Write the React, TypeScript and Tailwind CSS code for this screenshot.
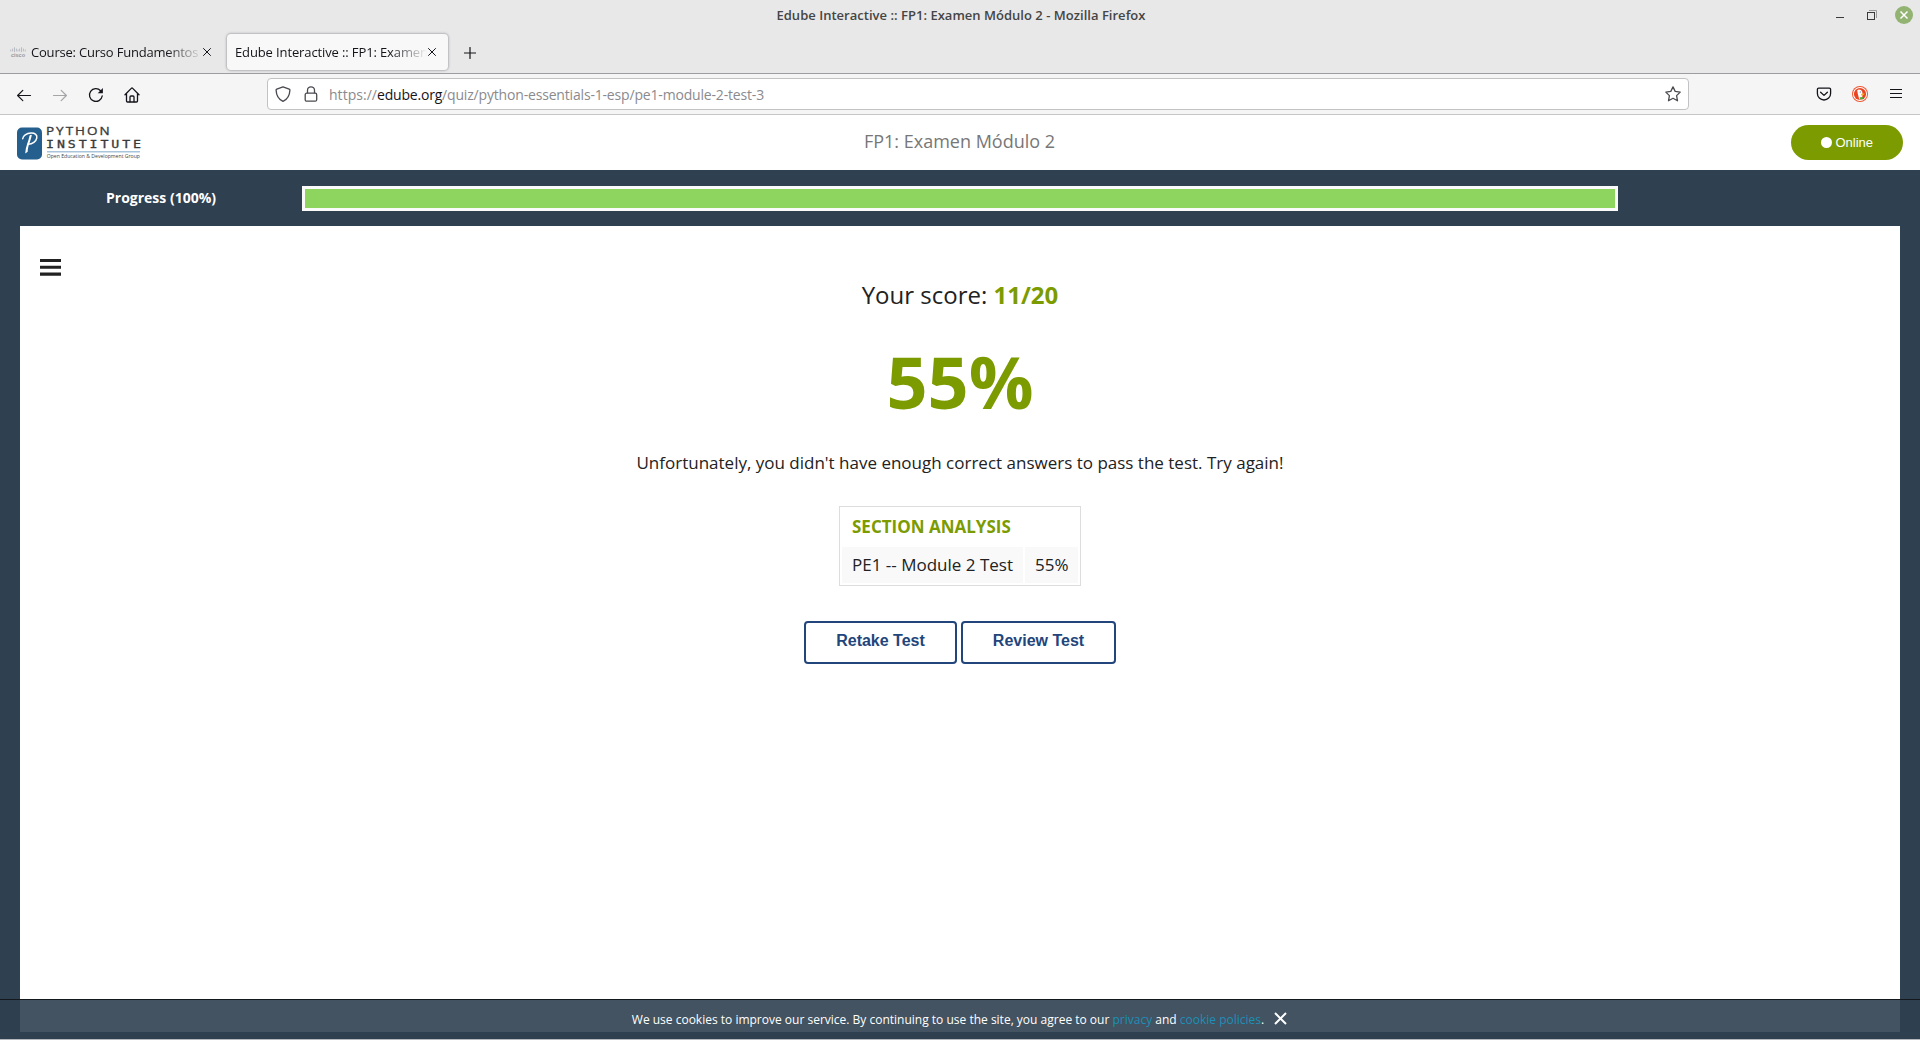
import React from "react";

const OPEN = "font-['Open_Sans',sans-serif]";

function CloseGlyph({ className }: { className?: string }) {
  return (
    <svg width="8" height="8" viewBox="0 0 8 8" className={className} fill="none" stroke="#15141a" strokeWidth="1" strokeLinecap="round">
      <path d="M0.5 0.5 7.5 7.5M7.5 0.5 0.5 7.5" />
    </svg>
  );
}

function CiscoIcon() {
  return (
    <svg width="16" height="10" viewBox="0 0 16 10" className="shrink-0 overflow-visible">
      <g stroke="#b9bbc3" strokeWidth="1" strokeLinecap="round">
        <path d="M.7 3v1M2.6 2v2M4.500 .7v4M6.400 2v2M8 3v1M9.600 2v2M11.500 .7v4M13.400 2v2M15.300 3v1" />
      </g>
      <text x="1" y="9.800" fontSize="5.800" fontWeight="700" fill="#9496a0" textLength="14" lengthAdjust="spacingAndGlyphs" fontFamily="Liberation Sans, sans-serif">
        cisco
      </text>
    </svg>
  );
}

function TitleBar() {
  return (
    <div className="relative flex h-[30px] items-center justify-center">
      <span className={`${OPEN} ml-[2px] text-[13px] font-semibold leading-[20px] tracking-[0.02px] text-[#454545]`}>
        Edube Interactive :: FP1: Examen Módulo 2 - Mozilla Firefox
      </span>
      <div className="absolute right-[7px] top-0 flex h-[30px] items-center">
        <svg width="8" height="12" viewBox="0 0 8 12" className="mr-[23px]">
          <rect x="0" y="8" width="8" height="1" fill="#3a3a3a" />
        </svg>
        <svg width="10" height="10" viewBox="0 0 10 10" className="mr-[18px]" fill="none">
          <path d="M2 .5H9.500V8" stroke="#9b9b9b" />
          <rect x=".5" y="2.500" width="7" height="7" stroke="#3a3a3a" />
        </svg>
        <svg width="18" height="18" viewBox="0 0 18 18">
          <circle cx="9" cy="9" r="9" fill="#92b372" />
          <path d="M5.500 5.500l7 7M12.500 5.500l-7 7" stroke="#fff" strokeWidth="1.500" />
        </svg>
      </div>
    </div>
  );
}

function TabStrip() {
  return (
    <div className="flex h-[43px] items-start pt-[4px]">
      <div className="flex h-[36px] w-[227px] items-center pl-[10px]">
        <CiscoIcon />
        <div className={`${OPEN} ml-[5px] w-[169px] whitespace-nowrap text-[13px] leading-[20px] tracking-[-0.2px] text-[#15141a] [mask-image:linear-gradient(to_right,#000_135px,transparent_172px)]`}>
          Course: Curso Fundamentos
        </div>
        <CloseGlyph className="ml-[3px]" />
      </div>
      <div className="flex h-[36px] w-[221px] items-center rounded-[4px] bg-[#f8f8f8] pl-[8px] shadow-[0_0_2px_1px_rgba(128,128,142,0.5)]">
        <div className={`${OPEN} w-[192px] whitespace-nowrap text-[13px] leading-[20px] tracking-[-0.12px] text-[#15141a] [mask-image:linear-gradient(to_right,#000_155px,transparent_192px)]`}>
          Edube Interactive :: FP1: Examen
        </div>
        <CloseGlyph className="ml-[1px]" />
      </div>
      <svg width="12" height="12" viewBox="0 0 12 12" className="ml-[16px] mt-[12.500px]">
        <path d="M6 .5v11M.5 6h11" stroke="#15141a" strokeWidth="1.200" strokeLinecap="round" />
      </svg>
    </div>
  );
}

function BackArrow({ color }: { color: string }) {
  return (
    <svg width="16" height="16" viewBox="0 0 16 16" fill="none" stroke={color} strokeWidth="1.200" strokeLinecap="round" strokeLinejoin="round">
      <path d="M14.500 8.500H1.600M6.800 3.300 1.600 8.500l5.200 5.200" />
    </svg>
  );
}

function NavBar() {
  return (
    <div className="flex h-[42px] items-center border-b border-t border-b-[#c6c6c9] border-t-[#9d9da1] bg-[#f5f5f6]">
      <div className="flex w-[267px] items-center pl-4 pt-px">
        <BackArrow color="#15141a" />
        <div className="ml-5 -scale-x-100">
          <BackArrow color="#a5a5a8" />
        </div>
        <svg width="16" height="16" viewBox="0 0 16 16" fill="none" className="ml-5">
          <path d="M14.200 9A6.400 6.400 0 1 1 12.600 3.700" stroke="#15141a" strokeWidth="1.300" strokeLinecap="round" />
          <path d="M14.900 1v5.200H9.700z" fill="#15141a" />
        </svg>
        <svg width="16" height="16" viewBox="0 0 16 16" fill="none" stroke="#15141a" strokeWidth="1.300" strokeLinejoin="round" strokeLinecap="round" className="ml-[19.500px]">
          <path d="M1 7.800 7.300 1.400a1 1 0 0 1 1.400 0L15 7.800M2.500 6.800V14a1 1 0 0 0 1 1h9a1 1 0 0 0 1-1V6.800" />
          <path d="M6 14.800V10a1 1 0 0 1 1-1h2a1 1 0 0 1 1 1v4.800" />
        </svg>
      </div>
      <div className="flex h-8 w-[1422px] items-center rounded-[4px] border border-[#c2c2c5] bg-white pl-[7px] pr-[7px]">
        <svg width="16" height="16" viewBox="0 0 16 16" fill="none" stroke="#4b4a50" strokeWidth="1.300" strokeLinejoin="round">
          <path d="M8 .8 14.200 3.100C14.700 3.300 14.900 3.600 14.900 4.100 14.700 9 13 13 8 15.300 3 13 1.300 9 1.100 4.100 1.100 3.600 1.300 3.300 1.800 3.100z" />
        </svg>
        <svg width="16" height="16" viewBox="0 0 16 16" fill="none" stroke="#4b4a50" strokeWidth="1.300" className="ml-[12px]">
          <rect x="2.200" y="7.200" width="11.500" height="8" rx="1.500" />
          <path d="M4.500 7.200V4.300a3.500 3.500 0 0 1 7 0v2.900" />
        </svg>
        <div className={`${OPEN} ml-[10px] flex-1 whitespace-nowrap pt-[2px] text-[14px] leading-[20px] tracking-[-0.175px] text-[#8a8a8e]`}>
          <span className="tracking-[0.03px]">https://</span>
          <span className="tracking-[-0.2px] text-[#15141a]">edube.org</span>
          /quiz/python-essentials-1-esp/pe1-module-2-test-3
        </div>
        <svg width="16" height="16" viewBox="0 0 16 16" fill="none" stroke="#4b4a50" strokeWidth="1.300" strokeLinejoin="round">
          <path d="M8 .9 10.200 5.400 15.200 6.100 11.600 9.600 12.500 14.800 8 12.300 3.500 14.800 4.400 9.600 .8 6.100 5.800 5.400z" />
        </svg>
      </div>
      <div className="flex flex-1 items-center pl-[127px]">
        <svg width="16" height="16" viewBox="0 0 16 16" fill="none" stroke="#15141a" strokeWidth="1.300" strokeLinecap="round" strokeLinejoin="round">
          <path d="M2.700 2.200h10.600a1.300 1.300 0 0 1 1.300 1.300V7.400a6.600 6.600 0 0 1-13.200 0V3.500a1.300 1.300 0 0 1 1.300-1.300z" />
          <path d="M4.600 6.200 8 9.400l3.400-3.200" />
        </svg>
        <svg width="16" height="16" viewBox="0 0 16 16" className="ml-[20px]">
          <circle cx="8" cy="8" r="8" fill="#f0542d" />
          <circle cx="8" cy="8" r="7.100" fill="#fff" />
          <circle cx="8" cy="8" r="6.100" fill="#ea4420" />
          <path d="M5.200 4.200C6.500 2.900 9.600 3.200 10.300 6l.3 2.600-.9 4.900-2.300.1C6.500 10.500 5.600 7.500 5.200 4.200z" fill="#fff" />
          <path d="M9 8.200c1.200-.7 3-.8 3.800-.3l-1.800 1.400-1.800.1z" fill="#fbb616" />
          <path d="M7.600 11.300 10.800 10.900 11 13.100 8 13.500z" fill="#4caf3f" />
          <circle cx="8.300" cy="6" r=".6" fill="#2d4f8e" />
        </svg>
        <svg width="12" height="10" viewBox="0 0 12 10" className="ml-[22px]">
          <path d="M0 .5h12M0 4.500h12M0 8.500h12" stroke="#15141a" strokeWidth="1.200" />
        </svg>
      </div>
    </div>
  );
}

function PythonInstituteLogo() {
  return (
    <svg width="124" height="38" viewBox="0 -1.500 124 38" className="overflow-visible">
      <rect x="0" y="2" width="25" height="32" rx="5" fill="#255f8e" />
      <g transform="translate(0 1)">
        <path
          d="M5.700 12.200C5.900 9.200 9.500 6.700 14 6.600 18.200 6.500 20.300 8.400 19.800 11.300 19.200 14.700 15.500 17.900 11 17.800"
          fill="none"
          stroke="#fff"
          strokeWidth="1.500"
          strokeLinecap="round"
        />
        <path d="M13.800 8.300 12.600 9.100C11.600 14.500 8.500 20.500 8.200 27L10.700 25.200C10.600 20 13.800 14.500 14.800 8.600z" fill="#fff" />
      </g>
      <g fill="#3b3b3b" stroke="#3b3b3b" strokeWidth=".3" transform="scale(1.250 1)">
        <text x="23.200" y="9.800" fontSize="10.800" textLength="51" lengthAdjust="spacing" fontWeight="500" fontFamily="Open Sans, sans-serif">
          PYTHON
        </text>
        <text x="23.200" y="22.500" fontSize="10.600" textLength="76" lengthAdjust="spacing" fontFamily="DejaVu Sans Mono, monospace">
          INSTITUTE
        </text>
      </g>
      <rect x="30" y="25.500" width="93" height="1.500" fill="#a9c5dc" />
      <text x="29.700" y="32.400" fontSize="5" fill="#444" textLength="93.300" lengthAdjust="spacingAndGlyphs" fontFamily="Open Sans, sans-serif">
        Open Education &amp; Development Group
      </text>
    </svg>
  );
}

function PageHeader() {
  return (
    <header className="grid h-[55px] grid-cols-3 items-center bg-white pl-[17px] pr-[17px]">
      <PythonInstituteLogo />
      <h1 className="relative -top-[1.500px] mr-px text-center text-[18px] leading-[24px] text-[#777]">FP1: Examen Módulo 2</h1>
      <button className="flex h-[35px] w-[112px] items-center justify-center justify-self-end rounded-full bg-[#7c9b00] font-['Liberation_Sans',sans-serif] text-[13px] text-white">
        <span className="mr-[3px] h-[11.500px] w-[11.500px] rounded-full bg-white" />
        Online
      </button>
    </header>
  );
}

function Results() {
  return (
    <main className="relative mx-5 flex h-[806px] flex-col items-center bg-white pt-[53px] text-[#222]">
      <svg width="21" height="18" viewBox="0 0 21 18" className="absolute left-[20px] top-[33px]">
        <path d="M0 1.500h21M0 8.300h21M0 15.100h21" stroke="#222" strokeWidth="3.100" />
      </svg>
      <h2 className="text-[24px] leading-[32px]">
        Your score: <strong className="font-bold text-[#7c9b00]">11/20</strong>
      </h2>
      <div className="mt-[30px] text-[72px] font-bold leading-[80px] text-[#7c9b00]">55%</div>
      <p className="mt-[30px] text-[17px] leading-[24px]">
        Unfortunately, you didn't have enough correct answers to pass the test. Try again!
      </p>
      <div className="mt-[31px] grid h-20 w-[242px] grid-cols-[181px_53px] grid-rows-[36px_36px] gap-[2px] border border-[#ddd] p-[2px] text-[17px] leading-[36px]">
        <div className="col-span-2 pl-[10px] font-bold text-[#7c9b00]">SECTION ANALYSIS</div>
        <div className="whitespace-nowrap bg-[#f9f9f9] pl-[10px]">PE1 -- Module 2 Test</div>
        <div className="bg-[#f9f9f9] pl-[10px]">55%</div>
      </div>
      <div className="mt-[35px] flex gap-1 font-['Liberation_Sans',sans-serif] text-[16px] font-bold text-[#22457c]">
        <button className="h-[43px] w-[153px] rounded-[4px] border-2 border-[#22457c] pb-1">Retake Test</button>
        <button className="h-[43px] w-[155px] rounded-[4px] border-2 border-[#22457c] pb-1">Review Test</button>
      </div>
    </main>
  );
}

function CookieBar() {
  return (
    <div className="absolute bottom-px left-0 flex h-[40px] w-full items-center justify-center border-t border-[#12181c] bg-[#2f4050]/90 text-[12px] leading-[18px] text-white">
      <p className="whitespace-pre">
        We use cookies to improve our service. By continuing to use the site, you agree to our{" "}
        <a className="text-[#1c8fb8]">privacy</a> and <a className="text-[#1c8fb8]">cookie policies</a>.
      </p>
      <svg width="13" height="13" viewBox="0 0 13 13" className="mb-[2px] ml-[10px] mr-px">
        <path d="M1 1l11 11M12 1 1 12" stroke="#fff" strokeWidth="2" />
      </svg>
    </div>
  );
}

export default function App() {
  return (
    <div className={`${OPEN} relative h-[1040px] w-[1920px] overflow-hidden bg-[#e8e8e8]`}>
      <TitleBar />
      <TabStrip />
      <NavBar />
      <PageHeader />
      <div className="h-[869px] bg-[#2f4050]">
        <div className="flex h-[56px] items-center">
          <div className="w-[302px] pl-5 text-center text-[14px] font-bold leading-[20px] text-white">Progress (100%)</div>
          <div className="h-[25px] w-[1316px] border-[3px] border-[#fafafa] bg-[#8ed560]" />
        </div>
        <Results />
      </div>
      <div className="h-px bg-[#b5b9bd]" />
      <CookieBar />
    </div>
  );
}
